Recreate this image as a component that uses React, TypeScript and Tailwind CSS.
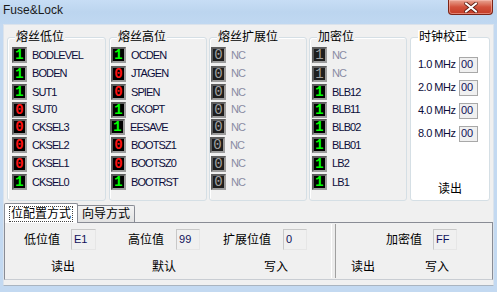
import React from 'react';

type Bit = { v: 0 | 1; label: string; dis?: boolean; shift?: boolean };

const H = [18, 19, 18, 17, 18, 18, 19, 18];
const HC = ['h-[18px]', 'h-[19px]', 'h-[18px]', 'h-[17px]', 'h-[18px]', 'h-[18px]', 'h-[19px]', 'h-[18px]'];

const g1: Bit[] = [
  { v: 1, label: 'BODLEVEL' },
  { v: 1, label: 'BODEN' },
  { v: 1, label: 'SUT1' },
  { v: 0, label: 'SUT0' },
  { v: 0, label: 'CKSEL3' },
  { v: 0, label: 'CKSEL2' },
  { v: 0, label: 'CKSEL1' },
  { v: 1, label: 'CKSEL0' },
];
const g2: Bit[] = [
  { v: 1, label: 'OCDEN' },
  { v: 0, label: 'JTAGEN' },
  { v: 0, label: 'SPIEN' },
  { v: 1, label: 'CKOPT' },
  { v: 1, label: 'EESAVE', shift: true },
  { v: 0, label: 'BOOTSZ1' },
  { v: 0, label: 'BOOTSZ0' },
  { v: 1, label: 'BOOTRST' },
];
const g3: Bit[] = Array.from({ length: 8 }, (_, i) => ({ v: 0 as 0 | 1, label: 'NC', dis: true, shift: i === 5 }));
const g4: Bit[] = [
  { v: 1, label: 'NC', dis: true },
  { v: 1, label: 'NC', dis: true },
  { v: 1, label: 'BLB12' },
  { v: 1, label: 'BLB11' },
  { v: 1, label: 'BLB02' },
  { v: 1, label: 'BLB01' },
  { v: 1, label: 'LB2' },
  { v: 1, label: 'LB1' },
];

function BitBox({ v, dis }: { v: 0 | 1; dis?: boolean }) {
  return (
    <div
      className={`w-[15px] h-[16px] shrink-0 flex items-center justify-center border-2 border-t-[#5e5e5e] border-l-[#5e5e5e] border-b-[#9c9c9c] border-r-[#9c9c9c] ${
        dis ? 'bg-[#1e1e1e]' : 'bg-black'
      }`}
    >
      <span
        className={`font-['Liberation_Mono',monospace] text-[14px] leading-none ${
          dis ? 'text-[#a0a0a0]' : v ? 'text-[#00ff00] font-bold' : 'text-[#ff1414] font-bold'
        }`}
      >
        {v}
      </span>
    </div>
  );
}

function Group({ title, bits, width, ml, pl }: { title: string; bits: Bit[]; width: string; ml: string; pl: string }) {
  return (
    <div className={`relative ${width} ${ml} h-[164px] shrink-0 border border-[#d5dfe5] rounded-[3px] shadow-[inset_1px_1px_0_#ffffff]`}>
      <span className="absolute -top-[8px] left-[7px] px-[1px] bg-[#f0f0f0] text-[12px] leading-[14px] text-black">{title}</span>
      <div className={`flex flex-col pt-[8px] ${pl}`}>
        {bits.map((b, i) => (
          <div key={i} className={`${HC[i]} flex items-center ${b.shift ? '-ml-[1px]' : ''}`}>
            <BitBox v={b.v} dis={b.dis} />
            <span
              className={`ml-[5px] text-[11px] leading-none tracking-[-0.9px] ${b.dis ? 'text-[#8a8ca4]' : 'text-[#0c0c3a]'}`}
            >
              {b.label}
            </span>
          </div>
        ))}
      </div>
    </div>
  );
}

function Edit({ v, w }: { v: string; w: string }) {
  return (
    <div
      className={`${w} h-[21px] shrink-0 flex items-center pl-[2px] bg-[#f0f0f0] border border-t-[#c8c8c8] border-l-[#c8c8c8] border-b-[#e6e6e6] border-r-[#e6e6e6] text-[11px] leading-none text-[#10105a]`}
    >
      {v}
    </div>
  );
}

export default function App() {
  void H;
  return (
    <div className="w-[497px] h-[292px] overflow-hidden bg-[#c3d9f1] font-['Liberation_Sans','Noto_Sans_CJK_SC',sans-serif] text-black flex flex-col">
      {/* title bar */}
      <div className="h-[24px] shrink-0 flex items-start justify-between bg-gradient-to-b from-[#c7ddf5] via-[#bcd5ef] to-[#c0d8f1]">
        <span className="mt-[3px] ml-[3px] text-[12px] leading-[14px] text-[#1a1a1a]">Fuse&amp;Lock</span>
        <div className="mr-[4px] w-[45px] h-[15px] rounded-b-[4px] border border-t-0 border-[#7d2416] bg-gradient-to-b from-[#e7a493] via-[#d2513c] to-[#c43b25] flex items-center justify-center shadow-[inset_0_0_0_1px_rgba(255,200,190,0.5)]">
          <svg width="14" height="11" viewBox="0 0 14 11">
            <path d="M2 1.5 L12 9.5 M12 1.5 L2 9.5" stroke="#5a1a10" strokeWidth="3.6" strokeLinecap="round" />
            <path d="M2 1.5 L12 9.5 M12 1.5 L2 9.5" stroke="#ffffff" strokeWidth="2.2" strokeLinecap="round" />
          </svg>
        </div>
      </div>

      {/* body */}
      <div className="mx-[3px] h-[262px] shrink-0 bg-[#f0f0f0] border border-[#dbe3ec] border-b-[#a9b4c0] flex flex-col">
        {/* groups */}
        <div className="flex mt-[12px] pl-[3px]">
          <Group title="熔丝低位" bits={g1} width="w-[99px]" ml="ml-0" pl="pl-[4px]" />
          <Group title="熔丝高位" bits={g2} width="w-[98px]" ml="ml-[3px]" pl="pl-[1px]" />
          <Group title="熔丝扩展位" bits={g3} width="w-[98px]" ml="ml-[2px]" pl="pl-[1px]" />
          <Group title="加密位" bits={g4} width="w-[98px]" ml="ml-[2px]" pl="pl-[2px]" />
          {/* clock */}
          <div className="relative ml-[3px] w-[80px] h-[164px] shrink-0 bg-white border border-[#d5dfe5] rounded-[3px] flex flex-col">
            <span className="absolute -top-[8px] left-[7px] px-[1px] bg-white text-[12px] leading-[14px]">时钟校正</span>
            <div className="flex flex-col pt-[15px] pl-[7px]">
              {['1.0 MHz', '2.0 MHz', '4.0 MHz', '8.0 MHz'].map((m) => (
                <div key={m} className="h-[23px] flex items-center">
                  <span className="w-[41px] text-[11px] leading-none tracking-[-0.5px] text-[#0c0c3a]">{m}</span>
                  <div className="w-[19px] h-[16px] flex items-center pl-[1px] bg-[#f0f0f0] border border-[#a8a8a8] text-[11px] leading-none text-[#10105a]">
                    00
                  </div>
                </div>
              ))}
            </div>
            <div className="mt-auto mb-[4px] text-center text-[12px] leading-[14px]">读出</div>
          </div>
        </div>

        {/* tabs */}
        <div className="flex items-end h-[19px] mt-[2px] relative z-10">
          <div className="w-[74px] h-[20px] -mb-px bg-white border border-b-0 border-[#898c95] rounded-t-[2px] flex items-center justify-center">
            <span className="border border-dotted border-[#444] px-[1px] text-[12px] leading-[14px]">位配置方式</span>
          </div>
          <div className="w-[57px] h-[17px] bg-gradient-to-b from-[#f3f3f3] to-[#e2e2e2] border border-l-0 border-b-0 border-[#898c95] rounded-tr-[2px] flex items-center justify-center text-[12px] leading-[14px]">
            向导方式
          </div>
        </div>

        {/* panel */}
        <div className="h-[58px] shrink-0 bg-[#f0f0f0] border border-[#898c95] border-b-[#c9cdd3] flex">
          {/* left */}
          <div className="w-[326px] shrink-0 flex flex-col">
            <div className="flex items-center mt-[6px] h-[21px] text-[12px] leading-[14px]">
              <span className="ml-[19px]">低位值</span>
              <div className="ml-[11px]"><Edit v="E1" w="w-[25px]" /></div>
              <span className="ml-[32px]">高位值</span>
              <div className="ml-[12px]"><Edit v="99" w="w-[24px]" /></div>
              <span className="ml-[23px]">扩展位值</span>
              <div className="ml-[12px]"><Edit v="0" w="w-[24px]" /></div>
            </div>
            <div className="flex items-center mt-[10px] h-[14px] text-[12px] leading-[14px]">
              <span className="ml-[46px]">读出</span>
              <span className="ml-[77px]">默认</span>
              <span className="ml-[88px]">写入</span>
            </div>
          </div>
          {/* separator */}
          <div className="mt-[1px] h-[54px] w-[5px] shrink-0 border-l border-l-white border-r border-r-[#a0a0a0] bg-[#ececec]" />
          {/* right */}
          <div className="flex-1 flex flex-col">
            <div className="flex items-center mt-[6px] h-[21px] text-[12px] leading-[14px]">
              <span className="ml-[50px]">加密值</span>
              <div className="ml-[11px]"><Edit v="FF" w="w-[24px]" /></div>
            </div>
            <div className="flex items-center mt-[10px] h-[14px] text-[12px] leading-[14px]">
              <span className="ml-[15px]">读出</span>
              <span className="ml-[50px]">写入</span>
            </div>
          </div>
        </div>
      </div>
    </div>
  );
}
